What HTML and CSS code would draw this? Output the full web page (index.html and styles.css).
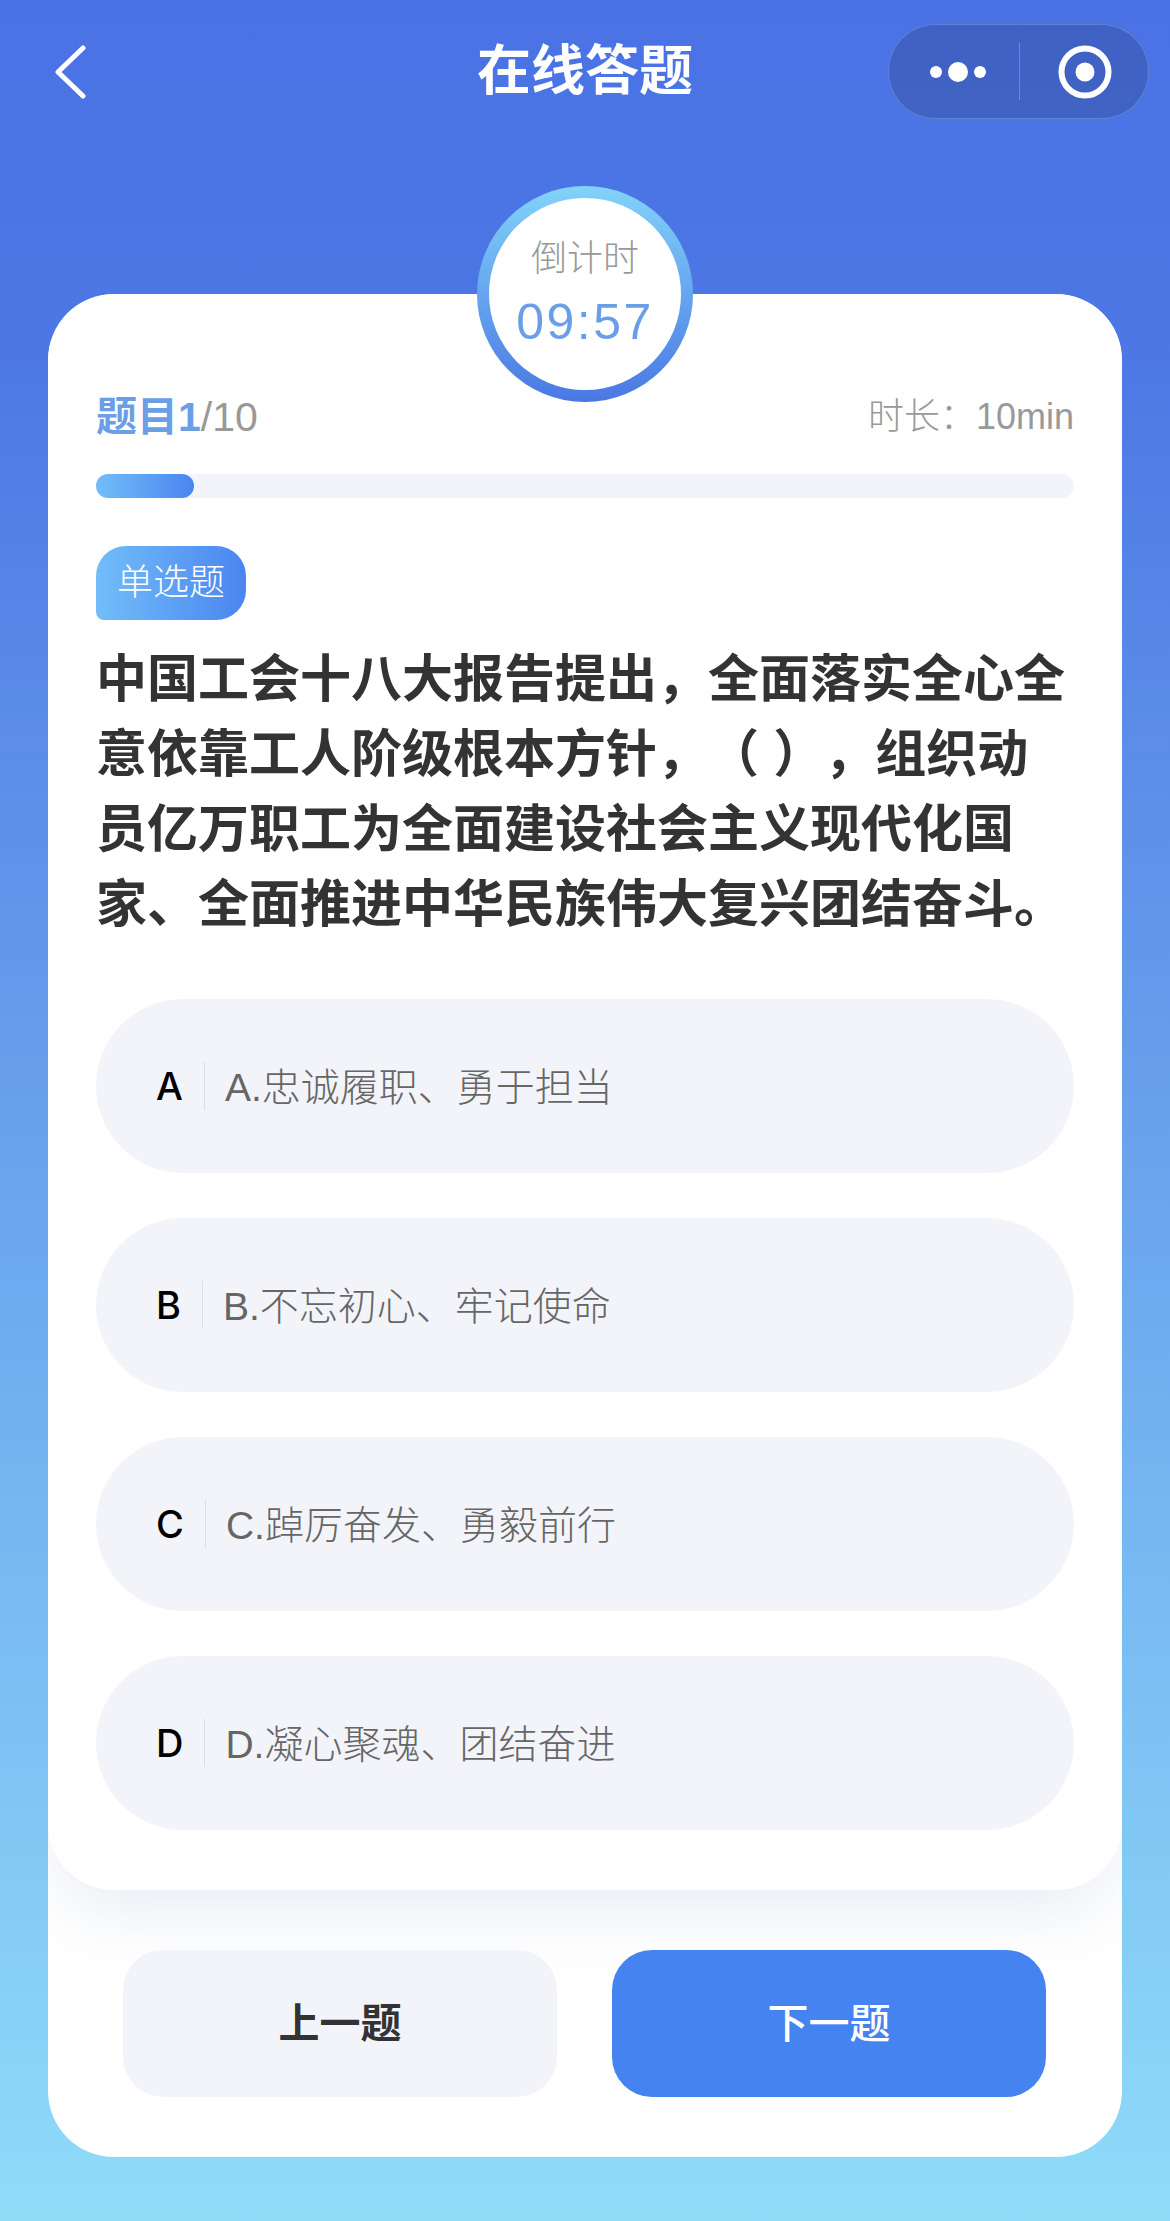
FILE: index.html
```html
<!DOCTYPE html>
<html lang="zh-CN">
<head>
    <meta charset="UTF-8">
    <meta name="viewport" content="width=device-width, initial-scale=1.0">
    <title>在线答题</title>
    <link rel="stylesheet" href="styles.css">
</head>
<body>
    <div class="page">
        <div class="nav-bar">
            <svg class="back-icon" viewBox="0 0 34 54" width="34" height="54">
                <path d="M29 3 L4 27 L29 51" fill="none" stroke="#fff" stroke-width="5" stroke-linecap="round" stroke-linejoin="round"/>
            </svg>
            <div class="nav-title">在线答题</div>
            <div class="capsule">
                <svg class="capsule-dots" viewBox="0 0 66 24" width="66" height="24">
                    <circle cx="11" cy="12" r="6" fill="#fff"/>
                    <circle cx="33" cy="12" r="10" fill="#fff"/>
                    <circle cx="55" cy="12" r="6" fill="#fff"/>
                </svg>
                <span class="capsule-line"></span>
                <svg class="capsule-target" viewBox="0 0 54 54" width="54" height="54">
                    <circle cx="27" cy="27" r="23.5" fill="none" stroke="#fff" stroke-width="6"/>
                    <circle cx="27" cy="27" r="9.5" fill="#fff"/>
                </svg>
            </div>
        </div>

        <div class="sheet-wrap">
            <div class="sheet">
                <div class="quiz-panel">
                    <div class="progress-head">
                        <div class="progress-count"><span class="progress-now">题目1</span>/10</div>
                        <div class="progress-time">时长：10min</div>
                    </div>
                    <div class="progress-track">
                        <div class="progress-fill"></div>
                    </div>

                    <div class="question-tag">单选题</div>
                    <div class="question-text">中国工会十八大报告提出，全面落实全心全意依靠工人阶级根本方针，（ ），组织动员亿万职工为全面建设社会主义现代化国家、全面推进中华民族伟大复兴团结奋斗。</div>

                    <div class="option-list">
                        <div class="option">
                            <span class="option-letter">A</span>
                            <span class="option-text">A.忠诚履职、勇于担当</span>
                        </div>
                        <div class="option">
                            <span class="option-letter">B</span>
                            <span class="option-text">B.不忘初心、牢记使命</span>
                        </div>
                        <div class="option">
                            <span class="option-letter">C</span>
                            <span class="option-text">C.踔厉奋发、勇毅前行</span>
                        </div>
                        <div class="option">
                            <span class="option-letter">D</span>
                            <span class="option-text">D.凝心聚魂、团结奋进</span>
                        </div>
                    </div>
                </div>

                <div class="actions">
                    <div class="btn btn-prev">上一题</div>
                    <div class="btn btn-next">下一题</div>
                </div>
            </div>

            <div class="timer">
                <div class="timer-inner">
                    <div class="timer-label">倒计时</div>
                    <div class="timer-value">09:57</div>
                </div>
            </div>
        </div>
    </div>
</body>
</html>
```

FILE: styles.css
```css
* {
    margin: 0;
    padding: 0;
    box-sizing: border-box;
}
body {
    font-family: "Liberation Sans", "Noto Sans CJK SC", sans-serif;
}
.page {
    height: 2221px;
    padding-top: 24px;
    background: linear-gradient(180deg, #4a72e5 0%, #4c77e4 15%, #8fdcf9 100%);
    overflow: hidden;
}
.nav-bar {
    position: relative;
    display: flex;
    align-items: center;
    justify-content: space-between;
    height: 95px;
    padding: 0 21px 0 54px;
}
.back-icon {
    display: block;
}
.nav-title {
    position: absolute;
    left: 0;
    right: 0;
    text-align: center;
    font-size: 54px;
    font-weight: bold;
    color: #fff;
    line-height: 97px;
}
.capsule {
    display: flex;
    align-items: center;
    width: 261px;
    height: 95px;
    padding-left: 36px;
    border: 1.5px solid rgba(255, 255, 255, 0.18);
    border-radius: 48px;
    background-color: rgba(0, 0, 0, 0.14);
}
.capsule-line {
    width: 1px;
    height: 57px;
    margin-left: 28px;
    margin-right: 38px;
    background-color: rgba(255, 255, 255, 0.25);
}
.sheet-wrap {
    position: relative;
    margin: 175px 48px 0;
}
.sheet {
    height: 1863px;
    background-color: #fff;
    border-radius: 66px;
    overflow: hidden;
}
.timer {
    position: absolute;
    top: -108px;
    left: 429px;
    width: 216px;
    height: 216px;
    padding: 12px;
    border-radius: 50%;
    background: linear-gradient(180deg, #82d3f9 0%, #4a78e3 100%);
}
.timer-inner {
    width: 100%;
    height: 100%;
    border-radius: 50%;
    background-color: #fff;
    text-align: center;
}
.timer-label {
    padding-top: 35px;
    font-size: 36px;
    font-weight: 300;
    line-height: 52px;
    color: #999;
}
.timer-value {
    margin-top: 9px;
    font-size: 50px;
    line-height: 56px;
    letter-spacing: 2.5px;
    color: #6a9fe8;
}
.quiz-panel {
    height: 1596px;
    padding: 94px 48px 0;
    background-color: #fff;
    border-radius: 66px;
    box-shadow: 0 30px 70px -10px rgba(80, 110, 170, 0.13);
}
.progress-head {
    display: flex;
    align-items: center;
    justify-content: space-between;
    height: 50px;
}
.progress-count {
    font-size: 41px;
    font-weight: 300;
    color: #999;
}
.progress-now {
    font-weight: bold;
    color: #6a9fe8;
}
.progress-time {
    font-size: 36px;
    font-weight: 300;
    color: #999;
}
.progress-track {
    height: 24px;
    margin-top: 36px;
    border-radius: 12px;
    background-color: #f3f4f9;
}
.progress-fill {
    width: 98px;
    height: 24px;
    border-radius: 12px;
    background: linear-gradient(90deg, #72bdf9 0%, #4a85f0 100%);
}
.question-tag {
    width: 150px;
    height: 74px;
    margin-top: 48px;
    border-radius: 30px 30px 30px 8px;
    background: linear-gradient(90deg, #72bdf9 0%, #4a85f0 100%);
    text-align: center;
    font-size: 36px;
    font-weight: 300;
    line-height: 74px;
    color: #fff;
}
.question-text {
    margin-top: 22px;
    font-size: 51px;
    font-weight: bold;
    line-height: 75px;
    color: #333;
    text-spacing-trim: space-all;
}
.option-list {
    display: flex;
    flex-direction: column;
    gap: 45px;
    margin-top: 57px;
}
.option {
    display: flex;
    align-items: center;
    height: 174px;
    padding-left: 60px;
    border-radius: 87px;
    background-color: #f3f4f9;
}
.option-letter {
    padding-right: 21px;
    border-right: 1.5px solid #dcdde2;
    font-family: Inter, "Liberation Sans", sans-serif;
    font-size: 38px;
    line-height: 48px;
    font-weight: 500;
    color: #000;
}
.option-text {
    padding-left: 20px;
    padding-bottom: 4px;
    font-size: 39px;
    font-weight: 300;
    color: #666;
}
.actions {
    display: flex;
    justify-content: space-between;
    margin-top: 60px;
    padding: 0 76px 0 75px;
}
.btn {
    width: 434px;
    height: 147px;
    border-radius: 40px;
    text-align: center;
    font-size: 41px;
    line-height: 149px;
}
.btn-prev {
    background-color: #f3f4f9;
    font-weight: bold;
    color: #333;
}
.btn-next {
    background-color: #4583f0;
    font-weight: 500;
    color: #fff;
}
```
